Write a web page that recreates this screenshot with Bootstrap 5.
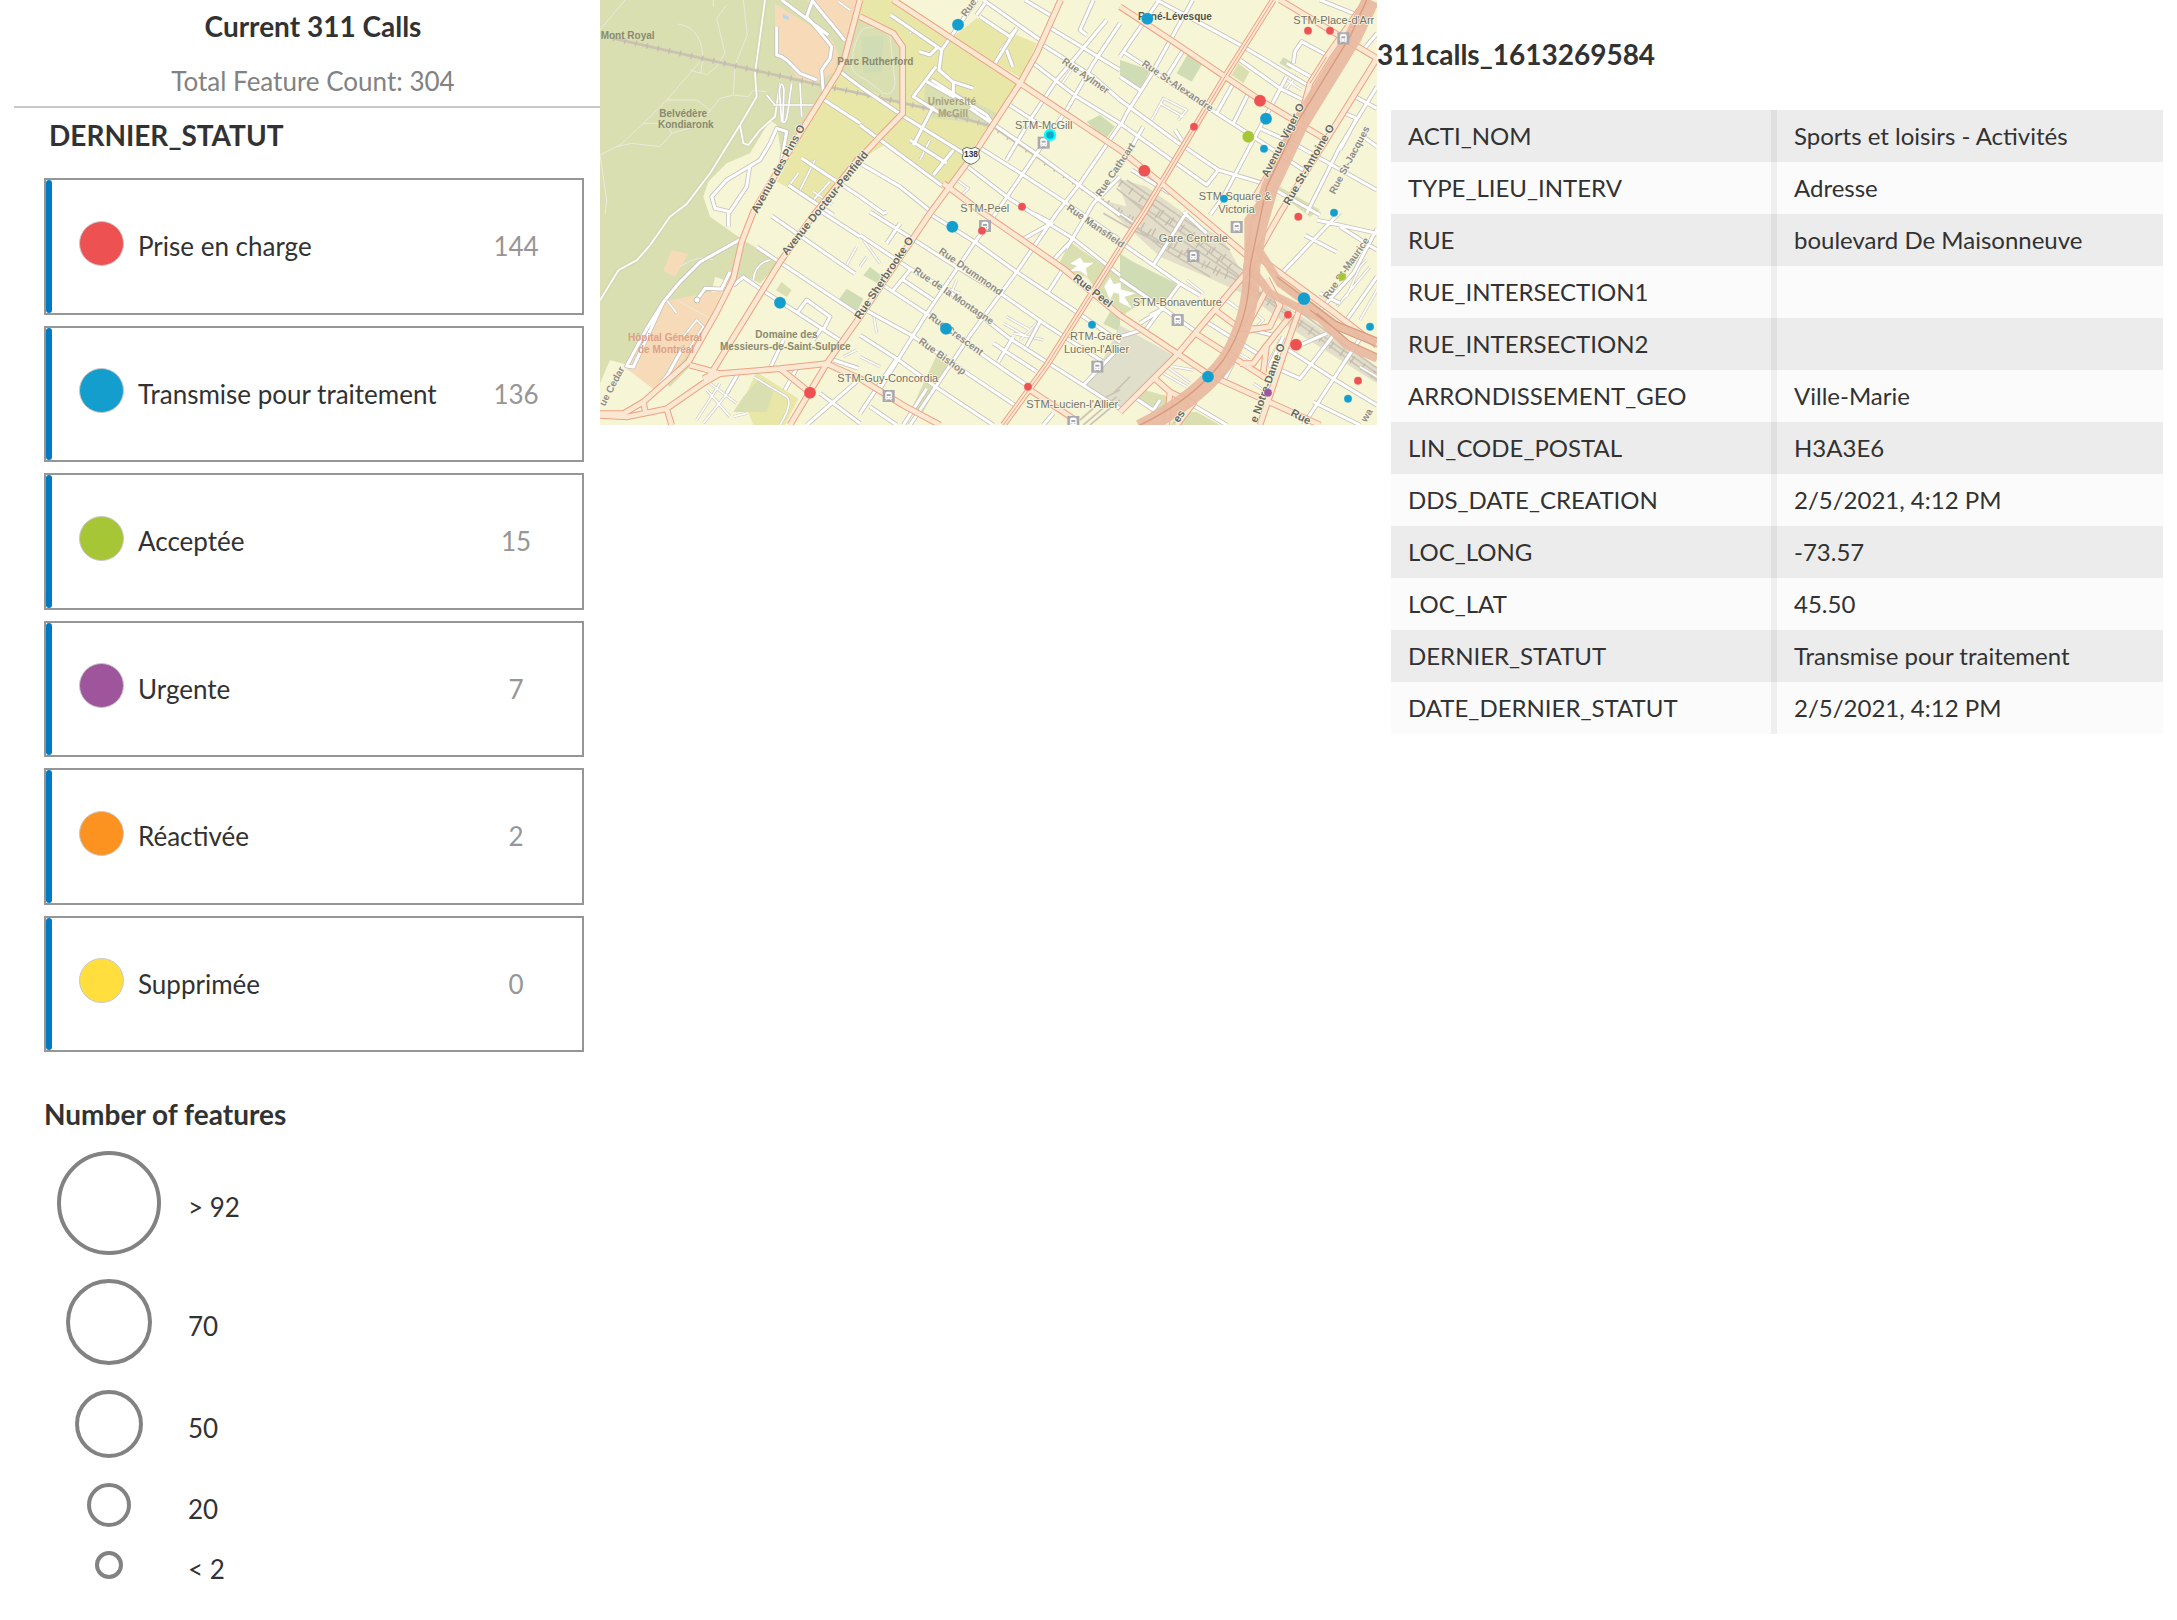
<!DOCTYPE html>
<html lang="fr">
<head>
<meta charset="utf-8">
<meta name="viewport" content="width=device-width, initial-scale=1">
<title>Current 311 Calls</title>
<link rel="stylesheet" href="https://cdn.jsdelivr.net/npm/bootstrap@5.3.0/dist/css/bootstrap.min.css">
<style>
  body { font-family: Lato, "Open Sans", sans-serif; font-size: 26px; line-height: 32px; color: #323232; background: #fff; }
  .pane-legend { flex: 600 1 0; }
  .pane-map { flex: 777 1 0; }
  .pane-details { flex: 800 1 0; }
  .panel-title { font-size: 28px; line-height: 32px; font-weight: 700; }
  .legend-head { margin-left: 14px; padding: 10px 0 0 12px; border-bottom: 2px solid #c8c8c8; }
  .feature-total { color: #828282; padding: 23px 0 9px; }
  .legend-body { padding: 11px 16px 0 44px; }
  .status-title { padding: 0 5px 27px; }
  .status-list { display: grid; grid-auto-rows: 1fr; gap: 11px; min-height: 874px; }
  .status-item { border: 2px solid #969696; }
  .status-bar { width: 6px; border-radius: 3px; background: #007ac2; }
  .status-dot { width: 45px; height: 45px; margin: 0 14px 6px 27px; border-radius: 50%; border: 1px solid #c8c8c8; }
  .dot-red { background: #ed5151; } .dot-blue { background: #149ece; } .dot-green { background: #a7c636; }
  .dot-purple { background: #9e559c; } .dot-orange { background: #fc921f; } .dot-yellow { background: #ffde3e; }
  .status-count { width: 72px; margin-right: 30px; color: #969696; text-align: center; }
  .size-title { padding-top: 46px; padding-bottom: 21px; }
  .size-list { display: grid; gap: 24px; }
  .size-symbol { width: 130px; }
  .size-symbol svg { display: block; fill: none; stroke: #828282; stroke-width: 4; }
  .size-label { height: 24px; margin-left: 14px; }
  .details-title { padding: 38px 0 40px; }
  .details-table { margin: 0 14px; font-size: 24px; line-height: 30px; }
  .details-table table { table-layout: fixed; color: #323232; border-collapse: separate; border-spacing: 0; }
  .details-table th, .details-table td { height: 52px; font-weight: 400; padding: 0 0 0 17px; vertical-align: middle; background: #fbfbfb; }
  .details-table tr:nth-child(odd) > * { background: #ececec; }
  .details-table th { width: 50%; border-right: 6px solid #efefef; }
  .details-table tr:nth-child(odd) > th { border-right-color: #e0e0e0; }

  .city-map { display: block; width: 100%; height: auto; background: #f6f5d5; font-family: "Liberation Sans", Arial, sans-serif; }
  .city-map .park { fill: #d9dfb0; } .city-map .lawn { fill: #d0dcb4; } .city-map .campus { fill: #e8e7a8; }
  .city-map .hospital { fill: #f7dbb8; } .city-map .yard { fill: #e0dfcc; }
  .ln { fill: none; stroke-linejoin: round; }
  .trail { stroke: #fff; stroke-width: 5; }
  .trail-thin { stroke: #ece9e0; stroke-width: 3; }
  .street-edge { stroke: #c6c2bd; stroke-width: 14; }
  .street-core { stroke: #fff; stroke-width: 9; }
  .alley-edge { stroke: #cdc9c2; stroke-width: 9; }
  .alley-core { stroke: #fff; stroke-width: 5; }
  .road-edge { stroke: #eda284; stroke-width: 20; }
  .road-core { stroke: #fbe8d3; stroke-width: 14; }
  .road-mid { stroke: #eda284; stroke-width: 3; }
  .hwy { stroke: #e8b8a0; }
  .rail { stroke: #cac2b2; stroke-width: 8; }
  .tie { stroke: #c3bbab; stroke-width: 18; stroke-dasharray: 4 30; }
  .tracks { stroke: #cbc4b6; stroke-width: 5; }
  .sleepers { stroke: #c2bbad; stroke-width: 24; stroke-dasharray: 4 34; }
  .tag { fill: #747266; stroke: #f9f8e2; stroke-width: 5; paint-order: stroke; stroke-linejoin: round; font-size: 33px; }
  .tag-bold { font-weight: 700; fill: #6a6860; font-size: 33px; }
  .tag-street { font-weight: 700; fill: #908d86; font-size: 30px; }
  .tag-place { font-weight: 700; fill: #8a8a70; font-size: 30px; stroke: none; }
  .pt { stroke: #fff; stroke-opacity: .5; stroke-width: 1; }
  .red { fill: #ed5151; } .blue { fill: #149ece; } .green { fill: #a7c636; } .purple { fill: #9e559c; }
</style>
</head>
<body>
<div class="d-flex align-items-start">

  <aside class="pane-legend">
    <header class="legend-head text-center">
      <h1 class="panel-title mb-0">Current 311 Calls</h1>
      <div class="feature-total">Total Feature Count: 304</div>
    </header>
    <div class="legend-body">
      <h2 class="panel-title status-title mb-0">DERNIER_STATUT</h2>
      <ul class="status-list list-unstyled mb-0">
        <li class="status-item d-flex align-items-center"><span class="status-bar align-self-stretch"></span><span class="status-dot dot-red"></span><span class="flex-grow-1">Prise en charge</span><span class="status-count">144</span></li>
        <li class="status-item d-flex align-items-center"><span class="status-bar align-self-stretch"></span><span class="status-dot dot-blue"></span><span class="flex-grow-1">Transmise pour traitement</span><span class="status-count">136</span></li>
        <li class="status-item d-flex align-items-center"><span class="status-bar align-self-stretch"></span><span class="status-dot dot-green"></span><span class="flex-grow-1">Acceptée</span><span class="status-count">15</span></li>
        <li class="status-item d-flex align-items-center"><span class="status-bar align-self-stretch"></span><span class="status-dot dot-purple"></span><span class="flex-grow-1">Urgente</span><span class="status-count">7</span></li>
        <li class="status-item d-flex align-items-center"><span class="status-bar align-self-stretch"></span><span class="status-dot dot-orange"></span><span class="flex-grow-1">Réactivée</span><span class="status-count">2</span></li>
        <li class="status-item d-flex align-items-center"><span class="status-bar align-self-stretch"></span><span class="status-dot dot-yellow"></span><span class="flex-grow-1">Supprimée</span><span class="status-count">0</span></li>
      </ul>
      <h2 class="panel-title size-title mb-0">Number of features</h2>
      <ul class="size-list list-unstyled mb-0">
        <li class="d-flex align-items-center"><span class="size-symbol d-flex justify-content-center"><svg width="104" height="104"><circle cx="52" cy="52" r="50"/></svg></span><span class="size-label">&gt; 92</span></li>
        <li class="d-flex align-items-center"><span class="size-symbol d-flex justify-content-center"><svg width="86" height="86"><circle cx="43" cy="43" r="41"/></svg></span><span class="size-label">70</span></li>
        <li class="d-flex align-items-center"><span class="size-symbol d-flex justify-content-center"><svg width="70" height="70"><circle cx="35" cy="35" r="32"/></svg></span><span class="size-label">50</span></li>
        <li class="d-flex align-items-center"><span class="size-symbol d-flex justify-content-center"><svg width="44" height="44"><circle cx="22" cy="22" r="20"/></svg></span><span class="size-label">20</span></li>
        <li class="d-flex align-items-center"><span class="size-symbol d-flex justify-content-center"><svg width="28" height="28"><circle cx="14" cy="14" r="12"/></svg></span><span class="size-label">&lt; 2</span></li>
      </ul>
    </div>
  </aside>

  <main class="pane-map">
    <svg class="city-map" viewBox="0 0 2331 1275" role="img" aria-label="Montréal">
      <defs>
        <g id="trails">
          <path d="M495 0L465 220L470 290L420 375L330 520L260 612L210 650L150 736L110 781L55 811L0 901M420 375L430 430L445 435L480 390L525 350L540 250"/>
        </g>
        <g id="streets">
          <path d="M545 0L685 105M638 0L620 50L655 90L695 140L690 175L665 210L670 280M635 0L735 122M545 480L560 395L530 385L510 430L480 480L380 540L335 590L345 625L390 635L440 560L450 495M385 630V680"/>
          <path d="M530 80V165L545 170L560 180L600 220L650 240M720 215L780 260M665 295L780 370M605 475L780 590M565 555L700 645"/>
          <path d="M425 716L300 786L240 846L190 906L140 986L80 1098L100 1101L190 906M290 900L315 865L365 867L390 816M400 856L430 831L480 866L720 1021M515 648L765 821M470 741L780 946M665 636L780 710M590 940L620 900L690 950L670 990M640 1020L665 985M550 1020L510 1106M415 1120L380 1180M590 1105L555 1170M780 1136L620 1275M660 1180L780 1270M775 1105L700 1080M180 1150L200 1130L250 1040"/>
          <g transform="translate(780 0)">
            <path d="M92 45L245 150L237 210L278 245L340 265M245 150L350 0M0 260L125 345L140 355L310 460M0 375L250 560M0 590L70 640L80 636M0 490L120 560L220 640M178 155L210 165L235 140M228 200L160 290L240 340M215 240L380 345L400 375M330 325L520 455L650 550L780 645M355 440L490 525L620 610L780 720M310 490L440 590L540 655L640 716L780 826M440 310L550 380M520 190L650 290L780 370M540 130L700 230L780 300M565 80L780 210M370 0L540 120M495 0L570 45M360 50L450 110L470 85M375 10L350 45M470 85L405 190M440 150L458 200M700 0L660 90L680 105M740 60L590 240L510 360L440 480M780 70L700 190L620 330L530 460L410 636L345 726L200 941L60 1166M780 375L660 550L590 640L470 816L330 1006L150 1275M780 530L700 610L620 745M160 435L220 320M220 525L280 450M150 420L260 490M280 245V290L200 245"/>
            <path d="M200 636L345 726L470 816L650 936L780 1026M30 636L290 801L430 886L560 976L730 1086M0 706L150 806L270 876L450 1016L670 1156L780 1226M70 856L200 941L320 1031L500 1156M0 921L155 1006L330 1126L465 1216M0 1006L110 1076L235 1166L400 1275M520 640L570 666M640 716L580 780M610 806L565 876M120 670L80 730M150 810L100 870M130 840L220 900M110 1076L0 1240M200 1166L130 1275M30 1220L110 1275M780 1040L670 1156M580 1240L550 1275M540 965L500 1040M400 1030L530 1115M460 1010L415 1085M580 666L485 720"/>
          </g>
          <g transform="translate(1560 0)">
            <path d="M10 155L290 340L400 410L550 510M0 230L60 270M110 0L260 80L370 140L570 260M360 180L480 265L550 300M0 300L170 425L295 510L430 550L600 645M0 370L260 555L295 510M420 385L520 430L770 570M118 0L0 170M218 0L90 230L20 340L0 380M190 150L140 230M340 250L290 340M385 280L340 370M500 230L400 420L310 590L270 645M70 380L0 500M35 510L150 580M520 190L525 155L545 125L620 165M580 235L500 190M705 290L770 325M675 340L710 355L660 450M771 260L660 440L560 640M730 410L771 440M771 100L730 150M600 0L700 40M185 420L165 390"/>
            <path d="M200 636L100 796M180 851L80 986L0 1010M0 726L180 851L240 886M0 836L130 926L230 996M660 636L470 836M771 686L700 820L600 930M660 680L771 750M555 706L650 756M680 960L771 830M600 880L660 910M590 660L771 700M380 986L460 1006L420 1066L260 966M500 1046L640 1136L771 1216M640 1006L540 1136L450 1096L490 1010M720 1016L550 1275M580 1206L720 1275M530 1040L620 1000M340 1086L310 1146M40 1190L100 1230L120 1200M220 1216L320 1275M90 946L130 926L60 970M190 636L260 700"/>
          </g>
        </g>
        <g id="alleys">
          <path d="M600 570L645 480M565 560L595 520M640 575L700 615M640 600L690 545M545 365L538 270Q545 235 552 270L548 365Q560 380 568 300L575 250M605 350L600 250M520 315H640M500 285L525 315M715 5L750 30M200 900L230 940M250 1010L290 960L310 980L265 1050M320 1170L390 1250M330 1150L410 1210M290 1260L360 1150M310 1270L390 1170M400 1250L440 1240M460 1130L560 1190Q580 1210 540 1275M740 795L770 740M460 840Q465 790 510 780M730 1070L770 1050"/>
          <g transform="translate(780 0)"><path d="M10 720L60 790M20 770L0 800M40 940L50 1000M0 1070L60 1100M150 100L160 85M440 950L510 990M430 970L500 1010M460 1000L550 1020M480 1020L540 960M250 860L300 880M270 890L290 840M180 480L210 420M290 540L325 565L300 590M600 260L640 200M420 150L440 125"/></g>
          <g transform="translate(1560 0)"><path d="M95 360L130 295L200 330L175 360M120 310L190 350M485 260L530 290M500 240L545 270M515 225L560 255M495 275L530 225M200 840L250 880M320 900L360 930L300 890M140 1100L210 1150M130 1120L200 1160M160 1100L220 1110M340 1050L390 1080M380 920L430 960L410 980M620 900L740 780M650 920L750 800M680 890L720 800M400 1150L430 1170M440 1100L480 1020M720 960L771 870M720 1100L771 1130M0 640L60 680"/></g>
        </g>
        <g id="roads">
          <path d="M780 0L735 170L715 215L600 400L460 636L425 726L400 836L350 936L265 1086L130 1206L70 1241H0M780 470L640 646L540 786L330 1126L310 1136M270 1096L310 1106L360 1121L540 1106L680 1091L780 1136L910 1216L1020 1275M0 1246L80 1251L200 1226L310 1150L360 1121M200 1226L215 1275M540 1106L630 1178M130 1206L136 1236"/>
          <path d="M780 50L880 100L908 140V340L840 410L780 475M1382 0L1310 160L1260 250L1130 450L990 640L780 950L680 1091L570 1275M880 0L1260 250L1560 450L1690 555L1850 690L1940 766M1030 550L1150 640L1390 806L1560 946L1830 1126L2160 1275M2020 0L1875 230L1630 640L1560 746L1340 1096L1210 1275M1560 20L1720 125L1875 230L1980 300L2180 420M2300 0L2180 170L2130 250L2100 360L1960 600M2331 175L2210 370L2040 640L1940 816L1730 1066L1560 1236M2040 0L2331 175M2110 896L2060 1036L1980 1275M1840 926L1920 986H1980M1780 996L2000 1136M1284 1166L1420 1256M1700 1275L1710 1176L1665 1136M1710 1176L1780 1210L1730 1275M2000 836L2040 916L2010 980L1940 991M2080 936L2000 1036L1960 1090L1920 1091M2000 1036L1990 1116M1960 760L2200 936L2331 1036M2010 850L1940 980"/>
        </g>
        <g id="station">
          <rect x="-18" y="-18" width="36" height="36" fill="#a9a9ad"/>
          <path d="M-9 9V-9Q-9 -12 -4 -12H4Q9 -12 9 -9V9ZM-9 14L-5 9M9 14L5 9" fill="#fff" stroke="#fff" stroke-width="2"/>
          <path d="M-6 -6H6V0H-6Z" fill="#a9a9ad"/>
          <path d="M-6 5h3M3 5h3" stroke="#a9a9ad" stroke-width="3"/>
        </g>
      </defs>

      <!-- land use -->
      <path class="park" d="M0 0H790L720 210L670 290L600 380L545 470L530 375L510 360L450 460L380 490L325 545L310 590L330 650L400 700L430 720L540 786L480 850L440 830L400 850L345 830L330 900L200 905L130 1030L85 1096L30 1080L0 1150Z"/>
      <path class="hospital" d="M525 12L620 70L700 125L715 165L705 215L640 250L590 230L560 190L525 165ZM620 0H775L737 122L630 10ZM215 751L265 761L225 830L190 812ZM190 905L240 895L370 870L265 1086L190 1166L165 1171L80 1106Z"/>
      <path d="M548 42L567 50L565 60L550 54Z" fill="#b3d6f5"/>
      <path class="campus" d="M780 0H900L1260 240L1040 560L860 430L780 480L650 620L560 560L530 545L670 290L720 215ZM1130 55L1310 130L1265 235L1180 185L1060 110ZM470 1116L595 1196L555 1275H460L430 1200Z"/>
      <path class="park" d="M755 70L780 55L880 105L908 150V310L780 260L725 215ZM980 230L1190 340L1160 385L1130 370L1000 355L970 310ZM1915 190L1948 215L1930 250L1895 225ZM2040 560L2160 630L2130 650L2030 575ZM1370 806L1410 726L1560 830V930L1510 896L1460 830ZM1010 1066L1048 1086L970 1236L930 1236ZM1560 760L1620 800L1640 900L1560 950ZM1620 1166L1710 1191L1690 1236L1610 1196ZM1740 1236H1790L1860 1275H1710ZM2040 831L2140 886L2120 916L2030 856ZM430 1190L475 1140L520 1176L500 1236H400ZM545 846L575 871L560 891L528 871ZM265 1060L280 1090L210 1160L190 1150Z"/>
      <path class="lawn" d="M785 110L850 108L845 215L790 220ZM1460 365L1500 345L1545 380L1515 420ZM1560 180L1650 210L1625 265L1560 225ZM1765 160L1808 190L1775 245L1730 220ZM2050 172L2080 190L2070 208L2038 190ZM790 826L810 801L850 831L835 851ZM1530 936L1560 956V996L1510 971ZM1560 766L1730 851L1700 906L1660 911L1560 856ZM740 866L790 896L770 936L715 901ZM1890 1110L1870 1146L1850 1130Z"/>
      <path class="ln trail-thin" d="M790 85Q760 120 755 190Q750 220 800 240L850 280Q880 290 885 250L870 110Q840 70 790 85Z"/>
      <path class="yard" d="M1560 976L1720 1066L1640 1156L1560 1226L1450 1156L1510 1076Z"/>

      <!-- mountain trails -->
      <g class="ln trail-thin">
        <path d="M75 0L0 90M235 72Q310 85 308 180L302 220L270 210M200 300H290L330 330M430 0L442 105L405 195L400 285L360 295L320 345L300 355M400 285L445 290L460 270L500 275M0 465L60 435L130 370L200 300L300 185M130 370H200L215 400L180 440L95 430L50 440M215 400L320 370M0 465L20 600L15 645M300 215L320 225L350 200L375 160L350 55L380 15M340 0V20M240 800Q300 760 340 780M230 900L330 955"/>
      </g>
      <use href="#trails" class="ln street-edge" opacity=".25"/>
      <use href="#trails" class="ln trail"/>

      <!-- railway -->
      <path class="ln rail" d="M40 115L660 255L780 280L980 325L1180 380L1340 490L1560 640"/>
      <path class="ln tie" d="M40 115L660 255L780 280L980 325L1180 380L1340 490L1560 640"/>
      <path d="M1490 595L1580 620L1550 535L1640 560L1780 660L1870 720L1940 840L2331 1100V1150L2080 990L1950 890L1830 835L1680 770L1550 650Z" fill="#dbd6c4" fill-opacity=".75"/>
      <g class="ln tracks">
        <path d="M1490 595L1620 690L1780 780L1930 850L2331 1140M1560 540L1720 660L1900 790L2331 1105M1550 565L1700 690L1880 810L2331 1120M1520 610L1680 740L1830 830M1580 540L1740 650L1890 750M1510 640L1580 680L1700 740M1580 590L1780 720L1920 830M1440 1260L1520 1190L1560 1170M1450 1275L1550 1190M1470 1275L1560 1200M1540 1180L1590 1130"/>
      </g>
      <path class="ln sleepers" d="M1520 610L1740 760L1910 840L2331 1130M1560 550L1740 680L1880 780M1560 640L1740 740L1860 820M1640 620L1900 810"/>
      <path d="M1415 790L1440 775L1450 790L1475 790L1455 805L1460 825L1440 810L1415 812L1435 798ZM1515 860L1530 835L1540 855L1560 850V880L1540 875L1530 895ZM1560 870L1600 880L1570 890L1590 920L1560 905Z" fill="#fff" stroke="#fff" stroke-width="4"/>

      <!-- street network -->
      <use href="#alleys" class="ln alley-edge"/>
      <use href="#alleys" class="ln alley-core"/>
      <use href="#streets" class="ln street-edge"/>
      <use href="#streets" class="ln street-core"/>
      <circle cx="291" cy="900" r="9" fill="#fff" stroke="#c6c2bd" stroke-width="3"/>
      <use href="#roads" class="ln road-edge"/>
      <use href="#roads" class="ln road-core"/>
      <path class="ln road-mid" d="M2020 0L1875 230L1630 640L1560 746L1340 1096L1210 1275M2180 170L2130 250"/>

      <!-- expressways -->
      <g class="ln hwy" stroke-opacity=".92">
        <path stroke-width="52" d="M2312 0L2260 110L2100 370L2010 560L1975 680L1955 800Q1955 960 1880 1080Q1790 1200 1620 1285"/>
        <path stroke-width="24" d="M1990 600L1945 660V780M1970 740L2040 850L2130 916L2210 976L2331 1026M1950 800L2010 880L2160 956L2240 1036L2331 1076"/>
      </g>
      <path class="ln" stroke="#d99a80" stroke-width="4" d="M2300 0L2250 110L2090 370L2000 560L1950 800Q1950 960 1870 1080Q1780 1200 1610 1280M2030 830L2130 905L2210 965L2331 1014M2130 930L2210 990L2331 1040M2150 940L2250 1025L2331 1062"/>

      <!-- place labels -->
      <g class="tag tag-place">
        <text x="2" y="117">Mont Royal</text>
        <text x="178" y="350">Belvédère</text><text x="174" y="385">Kondiaronk</text>
        <text x="712" y="195">Parc Rutherford</text>
        <text x="466" y="1014">Domaine des</text><text x="360" y="1050">Messieurs-de-Saint-Sulpice</text>
      </g>
      <g class="tag tag-place" style="fill:#aaa27c"><text x="983" y="315">Université</text><text x="1014" y="350">McGill</text></g>
      <g class="tag tag-place" style="fill:#dfa088"><text x="84" y="1022">Hôpital Général</text><text x="114" y="1058">de Montréal</text></g>

      <!-- street labels -->
      <g class="tag tag-bold">
        <text transform="translate(472 642) rotate(-61)">Avenue des Pins O</text>
        <text transform="translate(560 768) rotate(-51)">Avenue Docteur-Penfield</text>
        <text transform="translate(780 960) rotate(-56)">Rue Sherbrooke O</text>
        <text transform="translate(1417 838) rotate(38)">Rue Peel</text>
        <text transform="translate(2003 534) rotate(-63)">Avenue Viger O</text>
        <text transform="translate(2068 618) rotate(-60)">Rue St-Antoine O</text>
        <text transform="translate(1970 1270) rotate(-70)">e Notre-Dame O</text>
        <text transform="translate(2070 1246) rotate(27)">Rue</text>
        <text transform="translate(1736 1270) rotate(-57)">es</text>
        <text x="1614" y="61" style="font-size:30px;fill:#55534c">René-Lévesque</text>
      </g>
      <g class="tag tag-street">
        <text transform="translate(1098 52) rotate(-55)">Rue</text>
        <text transform="translate(1384 188) rotate(35)">Rue Aylmer</text>
        <text transform="translate(1624 196) rotate(34)">Rue St-Alexandre</text>
        <text transform="translate(1502 592) rotate(-56)">Rue Cathcart</text>
        <text transform="translate(1398 628) rotate(35)">Rue Mansfield</text>
        <text transform="translate(1014 758) rotate(35)">Rue Drummond</text>
        <text transform="translate(938 816) rotate(34)">Rue de la Montagne</text>
        <text transform="translate(984 954) rotate(36)">Rue Crescent</text>
        <text transform="translate(954 1028) rotate(36)">Rue Bishop</text>
        <text transform="translate(2204 584) rotate(-62)">Rue St-Jacques</text>
        <text transform="translate(2184 900) rotate(-55)">Rue St-Maurice</text>
        <text transform="translate(14 1220) rotate(-62)">ue Cedar</text>
        <text transform="translate(2298 1268) rotate(-58)">wa</text>
      </g>

      <!-- stations -->
      <use href="#station" x="1331" y="428"/><use href="#station" x="2230" y="115"/><use href="#station" x="1155" y="678"/>
      <use href="#station" x="866" y="1188"/><use href="#station" x="1492" y="1100"/><use href="#station" x="1420" y="1266"/>
      <use href="#station" x="1910" y="681"/><use href="#station" x="1780" y="768"/><use href="#station" x="1733" y="960"/>
      <g class="tag">
        <text x="1245" y="387">STM-McGill</text><text x="1081" y="635">STM-Peel</text><text x="2080" y="73">STM-Place-d'Arr</text>
        <text x="1796" y="601">STM-Square &amp;</text><text x="1855" y="638">Victoria</text><text x="1676" y="725">Gare Centrale</text>
        <text x="1598" y="917">STM-Bonaventure</text><text x="1410" y="1021">RTM-Gare</text><text x="1392" y="1059">Lucien-l'Allier</text>
        <text x="712" y="1145">STM-Guy-Concordia</text><text x="1279" y="1224">STM-Lucien-l'Allier</text>
      </g>
      <path d="M1088 448L1100 442L1113 446L1126 442L1138 448Q1134 462 1139 472Q1136 486 1113 493Q1090 486 1087 472Q1092 462 1088 448Z" fill="#fff" stroke="#5d7a5d" stroke-width="3"/>
      <text x="1113" y="470" text-anchor="middle" font-size="25" font-weight="700" fill="#333">138</text>

      <!-- calls -->
      <circle cx="1350" cy="405" r="15" fill="#14a8c8" stroke="#0ff" stroke-width="7"/>
      <g class="pt blue">
        <circle cx="1074" cy="74" r="18"/><circle cx="1642" cy="56" r="18"/><circle cx="1998" cy="356" r="18"/><circle cx="540" cy="908" r="18"/>
        <circle cx="1057" cy="680" r="18"/><circle cx="1038" cy="986" r="18"/><circle cx="2112" cy="896" r="19"/><circle cx="1824" cy="1130" r="18"/>
        <circle cx="1992" cy="446" r="12"/><circle cx="1872" cy="596" r="12"/><circle cx="2202" cy="638" r="12"/><circle cx="1476" cy="974" r="12"/>
        <circle cx="2310" cy="980" r="12"/><circle cx="2244" cy="1196" r="12"/>
      </g>
      <g class="pt red">
        <circle cx="1980" cy="302" r="18"/><circle cx="1633" cy="512" r="18"/><circle cx="630" cy="1178" r="18"/><circle cx="2088" cy="1034" r="18"/>
        <circle cx="1266" cy="620" r="12"/><circle cx="2124" cy="92" r="12"/><circle cx="2190" cy="92" r="12"/><circle cx="1782" cy="380" r="12"/>
        <circle cx="2095" cy="650" r="12"/><circle cx="1146" cy="692" r="12"/><circle cx="1284" cy="1160" r="12"/><circle cx="2064" cy="944" r="12"/><circle cx="2274" cy="1142" r="12"/>
      </g>
      <g class="pt green"><circle cx="1945" cy="410" r="18"/><circle cx="2226" cy="830" r="12"/></g>
      <circle class="pt purple" cx="2004" cy="1178" r="12"/>
    </svg>
  </main>

  <section class="pane-details">
    <h2 class="panel-title details-title mb-0">311calls_1613269584</h2>
    <div class="details-table">
      <table class="w-100">
        <tbody>
          <tr><th scope="row">ACTI_NOM</th><td>Sports et loisirs - Activités</td></tr>
          <tr><th scope="row">TYPE_LIEU_INTERV</th><td>Adresse</td></tr>
          <tr><th scope="row">RUE</th><td>boulevard De Maisonneuve</td></tr>
          <tr><th scope="row">RUE_INTERSECTION1</th><td></td></tr>
          <tr><th scope="row">RUE_INTERSECTION2</th><td></td></tr>
          <tr><th scope="row">ARRONDISSEMENT_GEO</th><td>Ville-Marie</td></tr>
          <tr><th scope="row">LIN_CODE_POSTAL</th><td>H3A3E6</td></tr>
          <tr><th scope="row">DDS_DATE_CREATION</th><td>2/5/2021, 4:12 PM</td></tr>
          <tr><th scope="row">LOC_LONG</th><td>-73.57</td></tr>
          <tr><th scope="row">LOC_LAT</th><td>45.50</td></tr>
          <tr><th scope="row">DERNIER_STATUT</th><td>Transmise pour traitement</td></tr>
          <tr><th scope="row">DATE_DERNIER_STATUT</th><td>2/5/2021, 4:12 PM</td></tr>
        </tbody>
      </table>
    </div>
  </section>
</div>
<script src="https://cdn.jsdelivr.net/npm/bootstrap@5.3.0/dist/js/bootstrap.bundle.min.js"></script>
</body>
</html>
